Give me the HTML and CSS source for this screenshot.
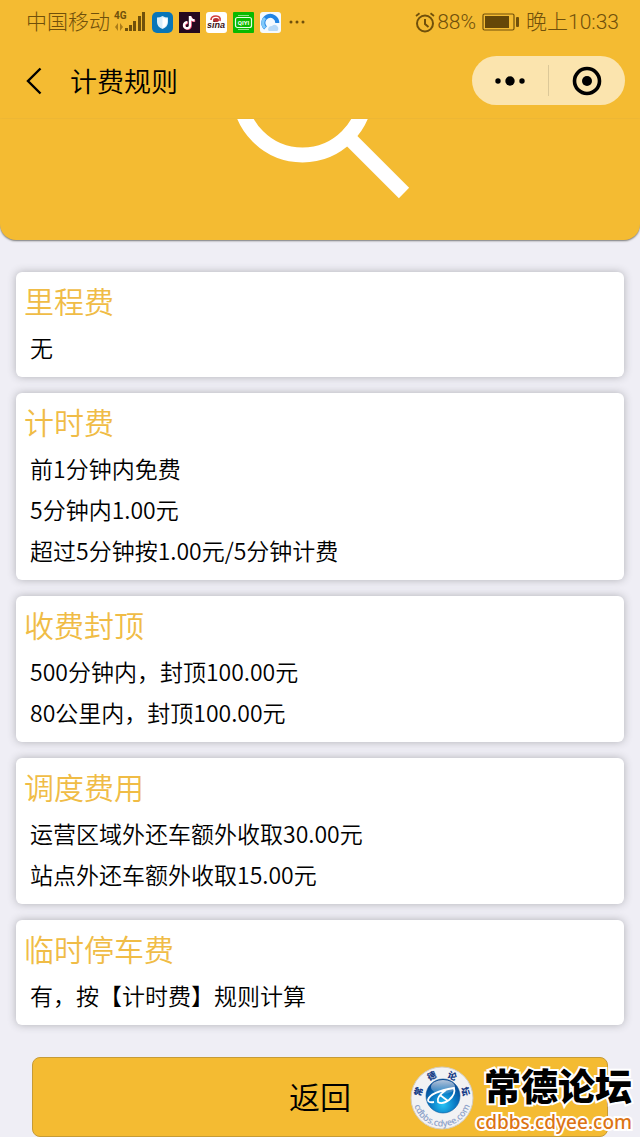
FILE: index.html
```html
<!DOCTYPE html>
<html lang="zh-CN">
<head>
<meta charset="utf-8">
<meta name="viewport" content="width=device-width, initial-scale=1">
<title>计费规则</title>
<link rel="stylesheet" href="styles.css">
</head>
<body>
<div class="page">
  <header class="header">
    <div class="status">
      <div class="status-side">
        <span>中国移动</span>
        <svg class="signal" width="33" height="24" viewBox="0 0 33 24" aria-hidden="true">
          <text class="network" x="1" y="9">4G</text>
          <g fill="#aa7b18"><path d="M2 17l3-4v8zM10 17l-3-4v8z"/></g>
          <g fill="#70500b"><rect x="12" y="18" width="3" height="3"/><rect x="16" y="15" width="3" height="6"/><rect x="20" y="11" width="3" height="10"/><rect x="25" y="6" width="3" height="15"/><rect x="29" y="2" width="3" height="19"/></g>
        </svg>
        <div class="apps">
          <svg width="21" height="21" viewBox="0 0 21 21" aria-hidden="true"><rect width="21" height="21" rx="5" fill="#0875b8"/><path d="M10.500 4Q13 5.500 16 5.500V10Q16 15 10.500 17Q5 15 5 10V5.500Q8 5.500 10.500 4Z" fill="#d8edfa"/><path d="M10.500 5.500Q12.500 6.500 15 6.500V10Q15 14 10.500 16Z" fill="#fff"/></svg>
          <svg width="21" height="21" viewBox="0 0 21 21" aria-hidden="true"><rect width="21" height="21" fill="#25091f"/><g fill="none" stroke-width="2.400"><path d="M11 4V13.500A3 3 0 1 1 8.300 10.300M11 4.500Q12 8.300 15.500 8.300" stroke="#ed4870" transform="translate(.7 .6)"/><path d="M11 4V13.500A3 3 0 1 1 8.300 10.300M11 4.500Q12 8.300 15.500 8.300" stroke="#fff"/></g></svg>
          <svg width="21" height="21" viewBox="0 0 21 21" aria-hidden="true"><rect width="21" height="21" rx="3" fill="#fff"/><path d="M5 8Q5 4 10 4Q15 4 14 9" fill="none" stroke="#d33c3c" stroke-width="1.600"/><ellipse cx="10" cy="8" rx="3" ry="2" fill="#b52f32"/><text class="sina" x="1" y="16">sina</text></svg>
          <svg width="21" height="21" viewBox="0 0 21 21" aria-hidden="true"><rect width="21" height="21" rx="1" fill="#09b900"/><rect x="2.500" y="5.500" width="16" height="10" rx="2" fill="none" stroke="#e7ffe4" stroke-width="1.200"/><path d="M5 3.500H16M5 17.500H16" stroke="#8de484"/><text class="iqiyi" x="10.500" y="13" text-anchor="middle">QIYI</text></svg>
          <svg width="21" height="21" viewBox="0 0 21 21" aria-hidden="true"><rect width="21" height="21" rx="3" fill="#f4faff"/><path d="M5.500 16A7 7 0 1 1 17.300 11" fill="none" stroke="#2385e4" stroke-width="4"/><path d="M5 16A7 7 0 0 1 5 6" fill="none" stroke="#80c9fa" stroke-width="3"/><path d="M8 18Q8 14 12 14Q15 11 18 15Q19 18 17 19H9Z" fill="#b8d9f6"/></svg>
        </div>
        <svg width="16" height="4" viewBox="0 0 16 4" fill="#70500b" aria-hidden="true"><circle cx="2" cy="2" r="1.500"/><circle cx="8" cy="2" r="1.500"/><circle cx="14" cy="2" r="1.500"/></svg>
      </div>
      <div class="status-side status-right">
        <svg width="20" height="21" viewBox="0 0 20 21" fill="none" stroke="#70500b" aria-hidden="true"><circle cx="10" cy="11.500" r="8" stroke-width="2"/><path d="M10 7V12L13.500 15" stroke-width="2"/><path d="M1 4L4.500 1.300M15.500 1.300L19 4" stroke-width="1.800"/></svg>
        <span>88%</span>
        <svg class="battery" width="38" height="18" viewBox="0 0 38 18" aria-hidden="true"><rect x="1" y="1" width="31" height="16" rx="1.500" fill="none" stroke="#70500b" stroke-width="1.200"/><rect x="3" y="3" width="24" height="12" fill="#654708"/><rect x="34" y="4" width="3" height="10" rx="1" fill="#70500b"/></svg>
        <span>晚上10:33</span>
      </div>
    </div>
    <div class="nav">
      <button class="icon-button back" aria-label="后退"><svg width="16" height="28" viewBox="0 0 16 28" fill="none" stroke="#000" stroke-width="2.400"><path d="M14.500 1.500L2 14L14.500 26.500"/></svg></button>
      <h1 class="title">计费规则</h1>
      <div class="capsule">
        <button class="icon-button capsule-button" aria-label="更多"><svg width="30" height="10" viewBox="0 0 30 10"><circle cx="3" cy="5" r="2.700"/><circle cx="15" cy="5" r="4.700"/><circle cx="27" cy="5" r="2.700"/></svg></button>
        <button class="icon-button capsule-button" aria-label="关闭"><svg width="30" height="30" viewBox="0 0 30 30"><circle cx="15" cy="15" r="12.500" fill="none" stroke="#000" stroke-width="3.600"/><circle cx="15" cy="15" r="5"/></svg></button>
      </div>
    </div>
  </header>
  <div class="banner">
    <svg width="180" height="80" viewBox="230 119 180 80" fill="none" stroke="#fff" aria-hidden="true"><circle cx="302.500" cy="92" r="63" stroke-width="14.800"/><path d="M350 139L404 193" stroke-width="14.500"/></svg>
  </div>
  <main class="rules">
    <section class="card"><h2 class="card-title">里程费</h2><p class="rule">无</p></section>
    <section class="card"><h2 class="card-title">计时费</h2><p class="rule">前1分钟内免费</p><p class="rule">5分钟内1.00元</p><p class="rule">超过5分钟按1.00元/5分钟计费</p></section>
    <section class="card"><h2 class="card-title">收费封顶</h2><p class="rule">500分钟内，封顶100.00元</p><p class="rule">80公里内，封顶100.00元</p></section>
    <section class="card"><h2 class="card-title">调度费用</h2><p class="rule">运营区域外还车额外收取30.00元</p><p class="rule">站点外还车额外收取15.00元</p></section>
    <section class="card"><h2 class="card-title">临时停车费</h2><p class="rule">有，按【计时费】规则计算</p></section>
  </main>
  <div class="actions"><button class="return">返回</button></div>
  <aside class="watermark">
    <svg width="64" height="64" viewBox="0 0 64 64" aria-hidden="true">
      <defs>
        <radialGradient id="ball" cx=".5" cy=".75" r=".75"><stop offset="0" stop-color="#27c4f5"/><stop offset=".5" stop-color="#0878c3"/><stop offset="1" stop-color="#063b86"/></radialGradient>
        <linearGradient id="shine" x2="0" y2="1"><stop stop-color="#fff" stop-opacity=".7"/><stop offset="1" stop-color="#fff" stop-opacity=".1"/></linearGradient>
        <path id="upper" d="M11 32A21 21 0 0 1 53 32"/>
        <path id="lower" d="M3.500 26A29 29 0 1 0 60.500 26"/>
      </defs>
      <circle cx="32" cy="32" r="31" fill="#f2f2f4" stroke="#d2ccc0"/>
      <text class="seal-name"><textPath href="#upper" startOffset="50%" text-anchor="middle">常　德　论　坛</textPath></text>
      <text class="seal-url"><textPath href="#lower" startOffset="50%" text-anchor="middle">cdbbs.cdyee.com</textPath></text>
      <circle cx="33" cy="30" r="17" fill="url(#ball)" stroke="#07579c" stroke-width=".6"/>
      <ellipse cx="33" cy="21" rx="12" ry="7" fill="url(#shine)"/>
      <path d="M24 36Q18 37 18 34Q20 26 44 22Q46 28 39 34Q32 39 28 36Q26 31 36 24M30 29L38 35" fill="none" stroke="#fff" stroke-width="1.800"/>
    </svg>
    <div class="forum"><span class="forum-name">常德论坛</span><span class="forum-url">cdbbs.cdyee.com</span></div>
  </aside>
</div>
</body>
</html>
```
FILE: styles.css
```css
* { box-sizing: border-box; }

body {
  margin: 0;
  background: #efeef5;
  color: #000;
  font-family: "Noto Sans CJK SC", sans-serif;
  font-weight: 350;
}

h1, h2, p { margin: 0; font-weight: inherit; }

svg { display: block; flex: none; }

button { font: inherit; color: inherit; cursor: pointer; }

.page {
  position: relative;
  min-height: 100vh;
}

.header {
  background: #f4bb32;
}

.status {
  display: flex;
  justify-content: space-between;
  align-items: center;
  height: 44px;
  padding: 0 21px 0 26px;
  color: #70500b;
  font-family: Roboto, "Noto Sans CJK SC", sans-serif;
  font-size: 21px;
  font-weight: 300;
  line-height: 24px;
  white-space: nowrap;
}

.status-side {
  display: flex;
  align-items: center;
}

.status-right { gap: 2px; }

.signal { margin: 0 6px 0 3px; }

.battery { margin: 0 4px; }

.network {
  font: 700 10px Roboto, sans-serif;
  fill: #70500b;
}

.apps {
  display: flex;
  gap: 6px;
  margin-right: 8px;
}

.sina {
  font: italic 700 9px "Liberation Sans", sans-serif;
  fill: #3d1516;
}

.iqiyi {
  font: 700 6px Roboto, sans-serif;
  fill: #fff;
}

.nav {
  display: flex;
  align-items: center;
  height: 75px;
  padding: 0 15px 2px 26px;
}

.icon-button {
  display: flex;
  align-items: center;
  justify-content: center;
  padding: 0;
  border: 0;
  background: none;
}

.title {
  margin-left: 28px;
  font-size: 27px;
  line-height: 40px;
}

.capsule {
  display: flex;
  width: 153px;
  height: 49px;
  margin-left: auto;
  border-radius: 25px;
  background: #fbe4ae;
}

.capsule-button {
  flex: 1;
  margin: 9px 0;
}

.capsule-button + .capsule-button { border-left: 1px solid #dcc898; }

.banner {
  display: flex;
  justify-content: center;
  height: 121px;
  border-radius: 0 0 16px 16px;
  background: #f4bb32;
  box-shadow: 0 1px 2px #777;
}

.rules {
  display: flex;
  flex-direction: column;
  gap: 16px;
  padding: 32px 16px;
}

.card {
  padding: 6px 8px 9px;
  border-radius: 6px;
  background: #fff;
  box-shadow: 0 0 8px #b0b0b6;
}

.card-title {
  margin-bottom: 4px;
  color: #f0bc46;
  font-size: 30px;
  line-height: 45px;
}

.rule {
  padding-left: 6px;
  font-size: 23px;
  line-height: 41px;
}

.actions { padding: 0 32px; }

.return {
  display: block;
  width: 100%;
  height: 80px;
  padding: 0 0 3px;
  border: 1px solid #c69b36;
  border-radius: 8px;
  background: #f4bb32;
  font-size: 31px;
}

.watermark {
  position: absolute;
  right: 8px;
  bottom: 2px;
  display: flex;
  align-items: center;
  gap: 2px;
  pointer-events: none;
}

.forum {
  display: flex;
  flex-direction: column;
  align-items: flex-end;
  white-space: nowrap;
}

.forum-name,
.forum-url {
  -webkit-text-stroke: 4px #fff;
  paint-order: stroke fill;
}

.forum-name {
  font-size: 37px;
  font-weight: 900;
  line-height: 48px;
}

.forum-url {
  color: #dc7415;
  font-family: "Noto Sans", sans-serif;
  font-size: 19px;
  font-weight: 500;
  line-height: 26px;
}

.seal-name {
  font: 900 9px "Noto Sans CJK SC", sans-serif;
  fill: #153c87;
}

.seal-url {
  font: 500 9px "Noto Sans", sans-serif;
  fill: #8ba0c8;
}
```
